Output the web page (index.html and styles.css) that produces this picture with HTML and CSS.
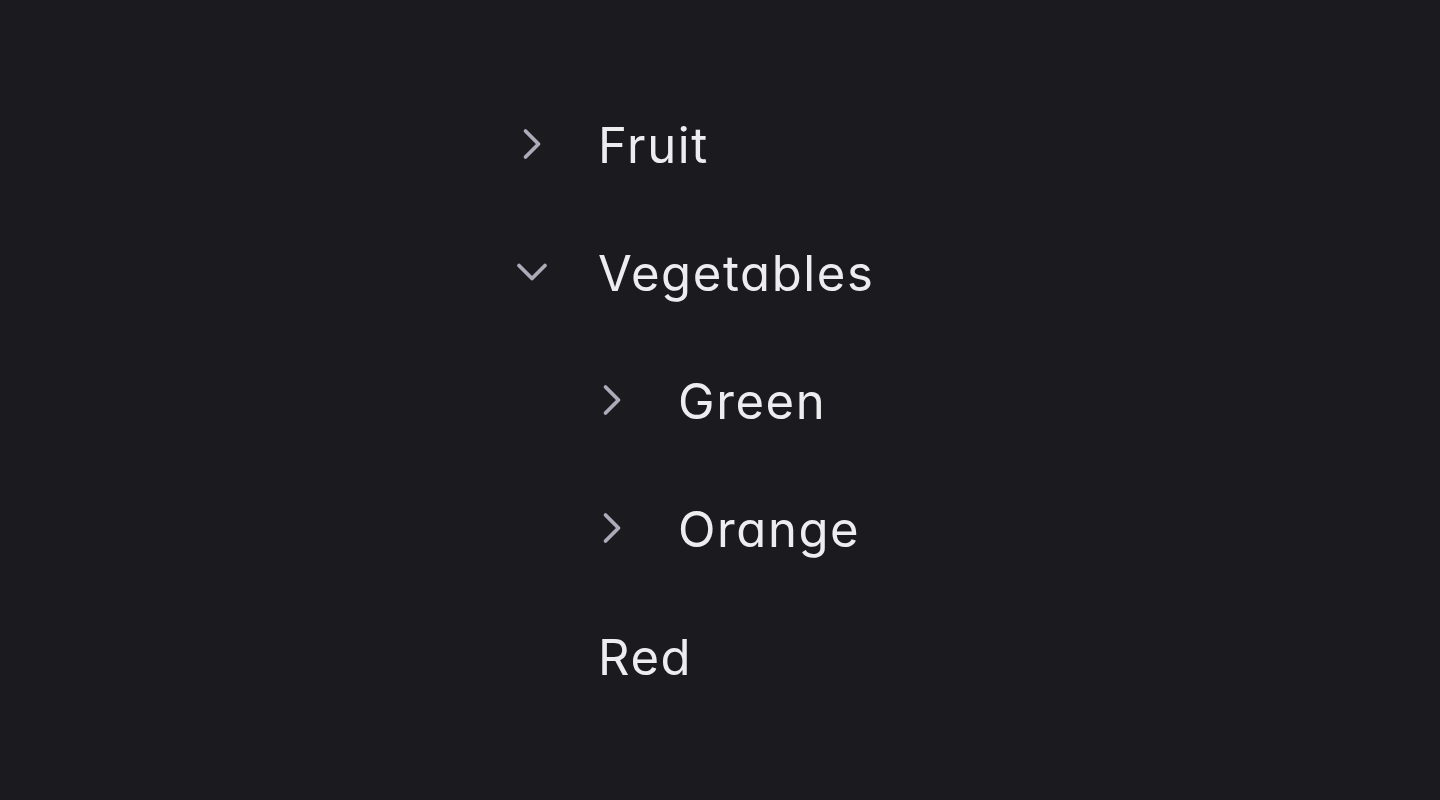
FILE: index.html
```html
<!DOCTYPE html>
<html lang="en">
<head>
    <meta charset="UTF-8">
    <meta name="viewport" content="width=device-width, initial-scale=1.0">
    <title>Tree</title>
    <link rel="stylesheet" href="styles.css">
</head>
<body>
    <main class="tree">
        <ul class="tree-list">
            <li class="tree-item">
                <div class="tree-row">
                    <span class="toggle">
                        <svg viewBox="0 0 40 40" width="40" height="40"><path d="M13.5 7 L26.5 20 L13.5 33"/></svg>
                    </span>
                    <span class="label">Fruit</span>
                </div>
            </li>
            <li class="tree-item">
                <div class="tree-row">
                    <span class="toggle">
                        <svg viewBox="0 0 40 40" width="40" height="40"><path d="M7 13.5 L20 26.5 L33 13.5"/></svg>
                    </span>
                    <span class="label">Vegetables</span>
                </div>
                <ul class="tree-list nested">
                    <li class="tree-item">
                        <div class="tree-row">
                            <span class="toggle">
                                <svg viewBox="0 0 40 40" width="40" height="40"><path d="M13.5 7 L26.5 20 L13.5 33"/></svg>
                            </span>
                            <span class="label">Green</span>
                        </div>
                    </li>
                    <li class="tree-item">
                        <div class="tree-row">
                            <span class="toggle">
                                <svg viewBox="0 0 40 40" width="40" height="40"><path d="M13.5 7 L26.5 20 L13.5 33"/></svg>
                            </span>
                            <span class="label">Orange</span>
                        </div>
                    </li>
                    <li class="tree-item leaf">
                        <div class="tree-row">
                            <span class="label">Red</span>
                        </div>
                    </li>
                </ul>
            </li>
        </ul>
    </main>
</body>
</html>
```

FILE: styles.css
```css
:root {
    --bg-color: #1b1a1f;
    --text-color: #ededf0;
    --icon-color: #acabb8;
}

body {
    margin: 0;
    padding: 0;
    background-color: var(--bg-color);
    color: var(--text-color);
    font-family: Inter, 'Noto Sans', sans-serif;
    font-feature-settings: "cv11" 1;
}

.tree {
    width: 440px;
    margin: 0 auto;
    padding-top: 80px;
}

.tree-list {
    list-style: none;
    margin: 0;
    padding: 0;
}

.tree-list.nested {
    padding-left: 80px;
}

.tree-row {
    display: flex;
    align-items: center;
    height: 128px;
}

.toggle {
    width: 64px;
    display: flex;
    justify-content: center;
    align-items: center;
    flex-shrink: 0;
}

.toggle svg {
    display: block;
    fill: none;
    stroke: var(--icon-color);
    stroke-width: 3.8;
    stroke-linecap: round;
    stroke-linejoin: round;
}

.label {
    margin-left: 34px;
    padding-top: 3px;
    font-size: 49px;
    line-height: 1;
    letter-spacing: 1.6px;
    white-space: nowrap;
}

.leaf .label {
    margin-left: 18px;
}
```
